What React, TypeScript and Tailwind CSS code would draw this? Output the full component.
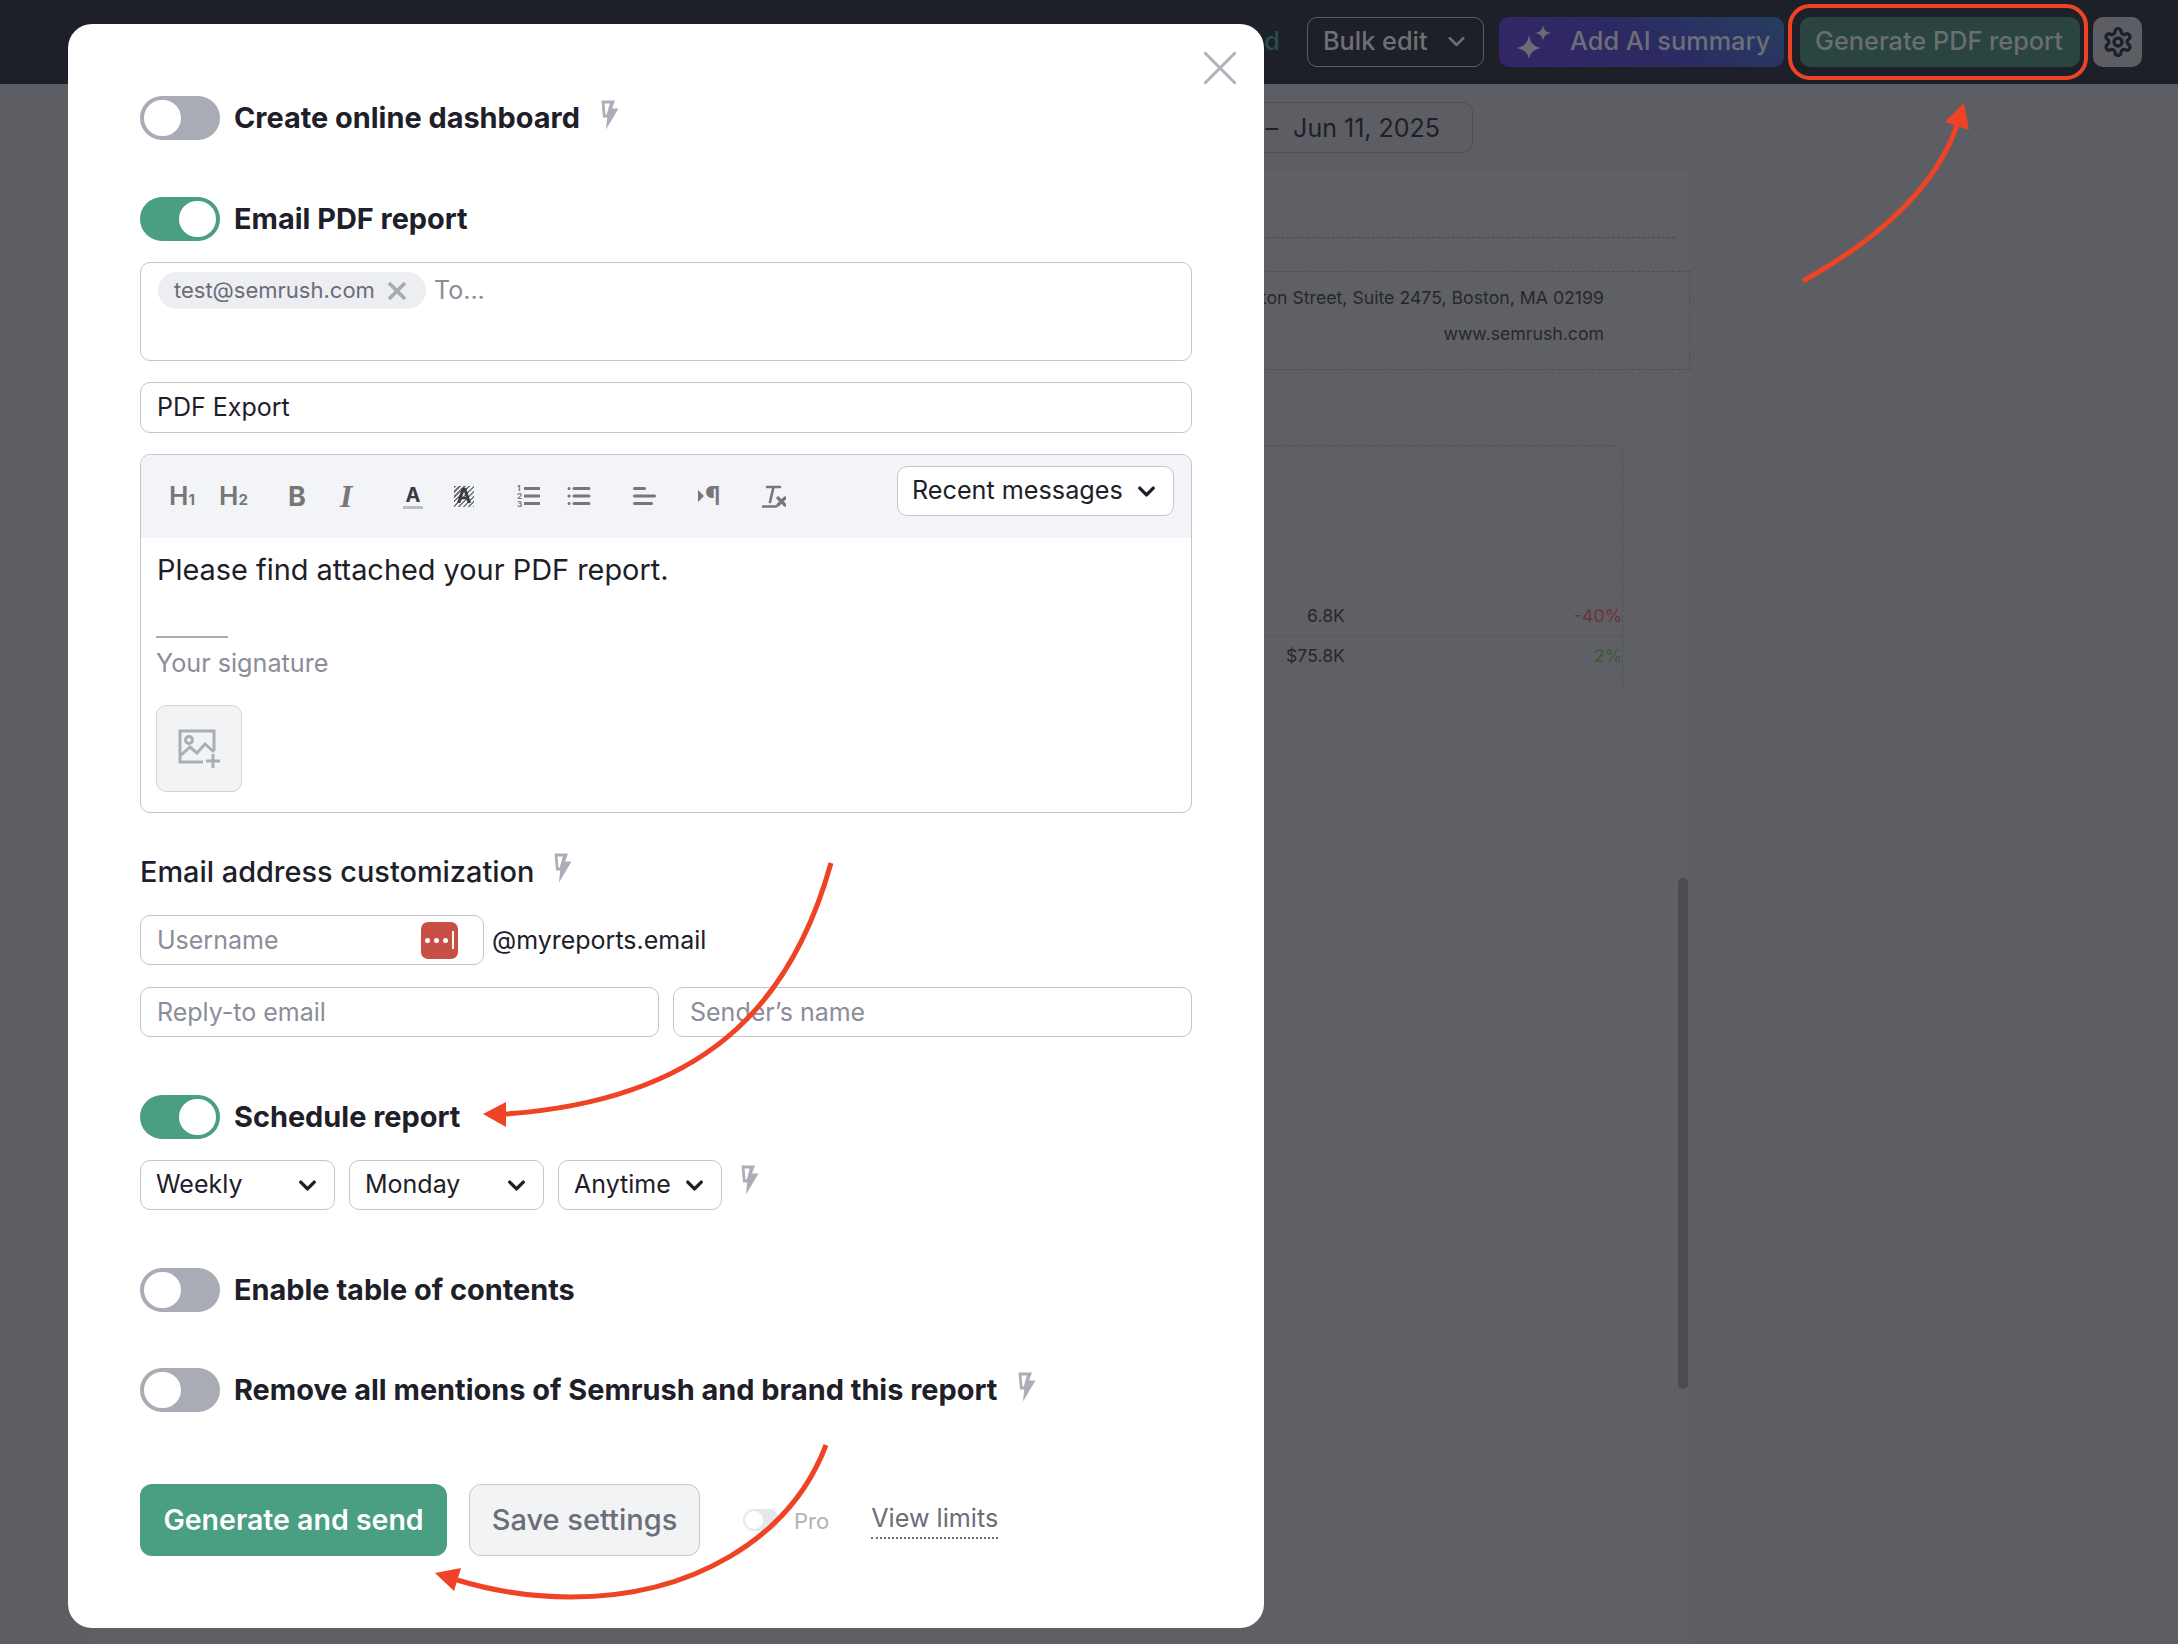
import { ChevronDown } from "lucide-react";

const font = "font-['Inter','Liberation_Sans',sans-serif]";

const Toggle = ({ on = false }: { on?: boolean }) => (
  <div
    className={`flex h-[44px] w-[80px] shrink-0 rounded-full p-[4px] ${
      on ? "justify-end bg-[#4a9e82]" : "justify-start bg-[#a9abb5]"
    }`}
  >
    <div className="h-[36px] w-[37px] rounded-full bg-white" />
  </div>
);

const Bolt = ({ className = "" }: { className?: string }) => (
  <svg viewBox="0 0 19 30" className={`h-[30px] w-[19px] shrink-0 ${className}`}>
    <path
      fillRule="evenodd"
      d="M1.500 .5h13.500L12 8.500h6.500L6 29.500l1.200-12H3zM4.500 3.500 5.500 14.500h1.300l3-11z"
      fill="#abadb7"
    />
  </svg>
);

const Select = ({ label, width }: { label: string; width: string }) => (
  <div
    className={`flex h-[50px] items-center justify-between rounded-[10px] border border-[#c4c5cd] bg-white pl-[15px] pr-[13px] text-[25px] text-[#1e2029] ${width}`}
  >
    <span>{label}</span>
    <ChevronDown size={27} strokeWidth={3} className="text-[#1e2029]" />
  </div>
);

const Input = ({ placeholder, className = "" }: { placeholder: string; className?: string }) => (
  <div
    className={`flex h-[50px] items-center rounded-[10px] border border-[#c4c5cd] bg-white pl-[16px] pr-[15px] pt-[1px] text-[25px] text-[#8b8d99] ${className}`}
  >
    {placeholder}
  </div>
);

const ToolSvg = ({ children, width = 24 }: { children: React.ReactNode; width?: number }) => (
  <svg width={width} height="24" viewBox={`0 0 ${width} 24`} fill="none" stroke="#777" strokeLinecap="round">
    {children}
  </svg>
);

const Heading = ({ n, className }: { n: string; className: string }) => (
  <span className={`flex items-baseline font-semibold text-[#777] ${className}`}>
    <span className="text-[26px] leading-none">H</span>
    <span className="text-[15px] font-bold leading-none">{n}</span>
  </span>
);

const Toolbar = () => (
  <div className="flex h-[83px] items-start justify-between rounded-t-[10px] bg-[#f3f4f8] pl-[28px] pr-[17px] pt-[11px]">
    <div className="flex h-[50px] items-center pt-[10px]">
      <Heading n="1" className="w-[50px]" />
      <Heading n="2" className="w-[69px]" />
      <span className="w-[52px] text-[27px] font-bold leading-none text-[#777]">B</span>
      <span className="w-[63px] font-['Liberation_Serif',serif] text-[32px] font-bold italic leading-none text-[#777]">I</span>
      <span className="flex w-[51px] flex-col items-center self-center pr-[31px]">
        <span className="text-[20px] font-bold leading-[22px] text-[#3a3b40]">A</span>
        <span className="h-[3px] w-[20px] shrink-0 bg-[#bdbdc0]" />
      </span>
      <span className="mr-[43px] flex h-[21px] w-[20px] items-center justify-center bg-[repeating-linear-gradient(135deg,#777_0,#777_1.5px,transparent_1.5px,transparent_3.5px)] text-[20px] font-bold leading-none text-[#3a3b40]">
        A
      </span>
      <span className="mr-[27px] flex items-center">
        <span className="flex w-[7px] flex-col text-[8px] font-bold leading-[8px] text-[#777]">
          <span>1</span>
          <span>2</span>
          <span>3</span>
        </span>
        <ToolSvg width={16}>
          <path d="M1 4.500h15M1 12h15M1 19.500h15" strokeWidth="3" />
        </ToolSvg>
      </span>
      <span className="mr-[42px]">
        <ToolSvg>
          <path d="M2 4.500h.1M2 12h.1M2 19.500h.1" strokeWidth="3" />
          <path d="M7 4.500h15M7 12h15M7 19.500h15" strokeWidth="3" />
        </ToolSvg>
      </span>
      <span className="mr-[41px]">
        <ToolSvg>
          <path d="M1.500 4.500h10M1.500 12h20M1.500 19.500h17" strokeWidth="3" />
        </ToolSvg>
      </span>
      <span className="mr-[41px] flex items-center">
        <span className="h-0 w-0 border-y-[6px] border-l-[6px] border-y-transparent border-l-[#777]" />
        <span className="ml-[1px] text-[26px] font-semibold leading-none text-[#777]">¶</span>
      </span>
      <span className="relative">
        <ToolSvg>
          <path d="M5 3h13M11.500 3 8 18M1 22.500h13" strokeWidth="2.600" />
          <path d="M16 14l7 7M23 14l-7 7" strokeWidth="3.200" />
        </ToolSvg>
      </span>
    </div>
    <div className="flex h-[50px] w-[277px] items-center justify-between rounded-[10px] border border-[#c4c5cd] bg-white pl-[14px] pr-[13px] text-[25.2px] text-[#1e2029]">
      <span>Recent messages</span>
      <ChevronDown size={27} strokeWidth={3} />
    </div>
  </div>
);

const Modal = () => (
  <div className="absolute left-[68px] top-[24px] h-[1604px] w-[1196px] rounded-[24px] bg-white pl-[72px] pr-[72px] text-[#1e2029]">
    <div className="absolute right-[28px] top-[28px]">
      <svg width="32" height="32" viewBox="0 0 32 32" stroke="#b0b2b9" strokeWidth="3" fill="none">
        <path d="M0 0l32 32M32 0 0 32" />
      </svg>
    </div>

    <div className="mt-[72px] flex h-[43px] items-center gap-[14px]">
      <Toggle />
      <span className="pt-[1px] text-[28.9px] font-bold">Create online dashboard</span>
      <Bolt className="-mt-[6px] ml-[6px]" />
    </div>

    <div className="mt-[58px] flex h-[43px] items-center gap-[14px]">
      <Toggle on />
      <span className="pt-[1px] text-[28.9px] font-bold">Email PDF report</span>
    </div>

    <div className="mt-[22px] flex h-[99px] items-start gap-[8px] rounded-[10px] border border-[#c4c5cd] pl-[17px] pt-[9px]">
      <div className="flex h-[37px] w-[268px] items-center justify-between rounded-full bg-[#eceef2] pl-[16px] pr-[19px] text-[22px] text-[#6b6d78]">
        test@semrush.com
        <svg width="20" height="20" viewBox="0 0 20 20" stroke="#a6a8b2" strokeWidth="3.600" fill="none">
          <path d="M2 2l16 16M18 2 2 18" />
        </svg>
      </div>
      <span className="text-[25px] leading-[37px] text-[#8b8d99]">To...</span>
    </div>

    <div className="mt-[21px] flex h-[51px] items-center rounded-[10px] border border-[#c4c5cd] pl-[16px] pr-[15px] text-[25px]">
      PDF Export
    </div>

    <div className="mt-[21px] h-[359px] rounded-[10px] border border-[#c4c5cd]">
      <Toolbar />
      <div className="px-[15px]">
        <p className="mt-[14px] pl-[1px] text-[28.9px] leading-[36px] text-[#1e2029]">Please find attached your PDF report.</p>
        <div className="mt-[48px] h-[2px] w-[72px] bg-[#a9abb5]" />
        <p className="mt-[8px] text-[25.2px] leading-[34px] text-[#8b8d99]">Your signature</p>
        <div className="mt-[25px] flex h-[87px] w-[86px] items-center justify-center rounded-[10px] border border-[#d3d4da] bg-[#f2f3f5]">
          <svg width="44" height="42" viewBox="0 0 44 42" fill="none" stroke="#abadb7" strokeWidth="3">
            <path d="M26 34H3V3h34v20" />
            <circle cx="12" cy="12" r="3.500" />
            <path d="M3 28l10-9 7 6 8-9 9 8" />
            <path d="M36 26v14M29 33h14" />
          </svg>
        </div>
      </div>
    </div>

    <div className="mt-[38px] flex h-[42px] items-center">
      <span className="text-[28.9px] font-medium">Email address customization</span>
      <Bolt className="-mt-[9px] ml-[19px]" />
    </div>

    <div className="mt-[22px] flex items-center gap-[8px]">
      <div className="flex h-[50px] w-[344px] items-center justify-between rounded-[10px] border border-[#c4c5cd] pl-[16px] pr-[25px] text-[25px] text-[#8b8d99]">
        <span className="pt-[1px]">Username</span>
        <div className="flex h-[37px] w-[37px] items-center justify-center gap-[4px] rounded-[7px] bg-[#c84f45]">
          <span className="h-[5px] w-[5px] shrink-0 rounded-full bg-white" />
          <span className="h-[5px] w-[5px] shrink-0 rounded-full bg-white" />
          <span className="h-[5px] w-[5px] shrink-0 rounded-full bg-white" />
          <span className="h-[18px] w-[2px] shrink-0 bg-white" />
        </div>
      </div>
      <span className="pt-[1px] text-[25px]">@myreports.email</span>
    </div>

    <div className="mt-[22px] flex gap-[14px]">
      <Input placeholder="Reply-to email" className="w-[519px]" />
      <Input placeholder="Sender’s name" className="w-[519px]" />
    </div>

    <div className="mt-[58px] flex h-[43px] items-center gap-[14px]">
      <Toggle on />
      <span className="pt-[1px] text-[28.9px] font-bold">Schedule report</span>
    </div>

    <div className="mt-[22px] flex items-center gap-[14px]">
      <Select label="Weekly" width="w-[195px]" />
      <Select label="Monday" width="w-[195px]" />
      <Select label="Anytime" width="w-[164px]" />
      <Bolt className="-mt-[10px] ml-[4px]" />
    </div>

    <div className="mt-[58px] flex h-[43px] items-center gap-[14px]">
      <Toggle />
      <span className="pt-[1px] text-[28.9px] font-bold">Enable table of contents</span>
    </div>

    <div className="mt-[57px] flex h-[44px] items-center gap-[14px]">
      <Toggle />
      <span className="text-[28.9px] font-bold">Remove all mentions of Semrush and brand this report</span>
      <Bolt className="-mt-[7px] ml-[6px]" />
    </div>

    <div className="mt-[72px] flex items-center">
      <div className="flex h-[72px] w-[307px] items-center justify-center rounded-[12px] bg-[#4a9e82] text-[28.5px] font-semibold text-white">
        Generate and send
      </div>
      <div className="ml-[22px] flex h-[72px] w-[231px] items-center justify-center rounded-[12px] border border-[#c6c7ce] bg-[#f2f3f5] text-[29px] font-medium text-[#6b6d78]">
        Save settings
      </div>
      <div className="ml-[43px] flex h-[22px] w-[36px] rounded-full bg-[#e6e7ea] p-[2px]">
        <div className="h-[18px] w-[18px] rounded-full bg-white" />
      </div>
      <span className="ml-[15px] mt-[2px] text-[22px] text-[#b0b2ba]">Pro</span>
      <span className="ml-[42px] border-b-2 border-dotted border-[#6b6d78] pb-[2px] text-[25.2px] leading-[34px] text-[#6b6d78]">
        View limits
      </span>
    </div>
  </div>
);

const Arrows = () => (
  <svg className="absolute left-0 top-0 h-[1644px] w-[2178px]" viewBox="0 0 2178 1644" fill="none">
    <rect x="1790" y="6" width="296" height="72" rx="20" stroke="#ee4325" strokeWidth="4" />
    <path d="M1803 281Q1930 210 1958 122" stroke="#ee4325" strokeWidth="5" />
    <path d="M1964 103 1945 122 1969 130z" fill="#ee4325" />
    <path d="M831 863C790 1010 700 1100 506 1114" stroke="#ee4325" strokeWidth="5" />
    <path d="M483 1114 506 1102 506 1127z" fill="#ee4325" />
    <path d="M826 1445C790 1540 690 1597 571 1597 530 1597 490 1590 457 1580" stroke="#ee4325" strokeWidth="5" />
    <path d="M435 1573 461 1568 454 1591z" fill="#ee4325" />
  </svg>
);

const Background = () => (
  <div className="flex h-[1644px] flex-col bg-[#5d5e63]">
    <header className="flex h-[84px] shrink-0 items-center justify-end bg-[#1e2029] pr-[36px]">
      <span className="mr-[27px] pb-[2px] text-[25.300px] font-medium text-[#2a4f46]">d</span>
      <div className="flex h-[50px] w-[177px] items-center justify-between rounded-[10px] border border-[#5d5e63] pb-[2px] pl-[15px] pr-[13px] text-[25.300px] font-medium text-[#6f7074]">
        Bulk edit
        <ChevronDown size={27} strokeWidth={2.5} />
      </div>
      <div className="ml-[15px] flex h-[50px] w-[285px] items-center gap-[17px] rounded-[10px] bg-[linear-gradient(30deg,#342568,#2c2a62_50%,#253f60)] pb-[2px] pl-[16px] text-[25.300px] font-medium text-[#6d6e78]">
        <svg width="38" height="36" viewBox="0 0 38 36" fill="#6c6d72">
          <path d="M14 12c1.500 8 4 11 12 13-8 2-10.500 5-12 11-1.500-6-4-9-12-11 8-2 10.500-5 12-13z" />
          <path d="M28 2c1 5 2.500 7 8 8-5.500 1-7 3-8 8-1-5-2.500-7-8-8 5.500-1 7-3 8-8z" />
        </svg>
        Add AI summary
      </div>
      <div className="ml-[16px] flex h-[50px] w-[280px] items-center justify-center rounded-[10px] bg-[#2a443f] pb-[2px] pr-[2px] text-[25.300px] font-medium text-[#6a6e72]">
        Generate PDF report
      </div>
      <div className="ml-[13px] flex h-[50px] w-[49px] items-center justify-center rounded-[10px] bg-[#5d5e63]">
        <svg width="32" height="32" viewBox="0 0 24 24" fill="none" stroke="#1e2029" strokeWidth="2.500">
          <path d="M12.220 2h-.44a2 2 0 0 0-2 2v.18a2 2 0 0 1-1 1.730l-.43.25a2 2 0 0 1-2 0l-.15-.08a2 2 0 0 0-2.730.73l-.22.38a2 2 0 0 0 .73 2.730l.15.1a2 2 0 0 1 1 1.720v.51a2 2 0 0 1-1 1.740l-.15.09a2 2 0 0 0-.73 2.730l.22.38a2 2 0 0 0 2.730.73l.15-.08a2 2 0 0 1 2 0l.43.25a2 2 0 0 1 1 1.730V20a2 2 0 0 0 2 2h.44a2 2 0 0 0 2-2v-.18a2 2 0 0 1 1-1.730l.43-.25a2 2 0 0 1 2 0l.15.08a2 2 0 0 0 2.730-.73l.22-.39a2 2 0 0 0-.73-2.730l-.15-.08a2 2 0 0 1-1-1.740v-.5a2 2 0 0 1 1-1.740l.15-.09a2 2 0 0 0 .73-2.730l-.22-.38a2 2 0 0 0-2.730-.73l-.15.08a2 2 0 0 1-2 0l-.43-.25a2 2 0 0 1-1-1.730V4a2 2 0 0 0-2-2z" />
          <circle cx="12" cy="12" r="3" />
        </svg>
      </div>
    </header>

    <div className="ml-[90px] flex w-[1600px] flex-1 flex-col">
      <div className="mr-[217px] mt-[18px] flex h-[51px] w-[300px] items-center self-end rounded-[10px] border border-[#4f5056] pr-[32px] pt-[2px] text-[25px] text-[#1e2029]">
        <span className="ml-auto mr-[15px]">–</span>
        Jun 11, 2025
      </div>
      <div className="mt-[18px] flex flex-1 flex-col bg-[#5f6065]">
        <div className="mr-[15px] mt-[66px] border-b border-dashed border-[#48494e]" />
        <div className="mt-[33px] flex h-[99px] flex-col items-end border border-dashed border-[#4d4e53] pr-[85px] pt-[8px] text-[17.700px] leading-[36px] text-[#26272c]">
          <span>One Washington Street, Suite 2475, Boston, MA 02199</span>
          <span>www.semrush.com</span>
        </div>
        <div className="ml-auto mr-[67px] mt-[75px] flex h-[243px] w-[400px] flex-col justify-end rounded-tr-[10px] border-r border-t border-dashed border-[#505156] text-[17.700px] text-[#26272c]">
          <div className="flex h-[40px] items-center border-b border-[#595a5f] pl-[10px] pt-[2px]">
            <span className="w-[112px] text-right">6.8K</span>
            <span className="ml-auto text-[#6b3338]">-40%</span>
          </div>
          <div className="mb-[12px] flex h-[40px] items-center pl-[10px]">
            <span className="w-[112px] whitespace-nowrap text-right">$75.8K</span>
            <span className="ml-auto text-[#3c5a35]">2%</span>
          </div>
        </div>
      </div>
    </div>
  </div>
);

export default function App() {
  return (
    <div className={`relative h-[1644px] w-[2178px] overflow-hidden ${font}`}>
      <Background />
      <div className="absolute left-[1678px] top-[878px] h-[511px] w-[10px] rounded-full bg-[#4b4c51]" />
      <Modal />
      <Arrows />
    </div>
  );
}
